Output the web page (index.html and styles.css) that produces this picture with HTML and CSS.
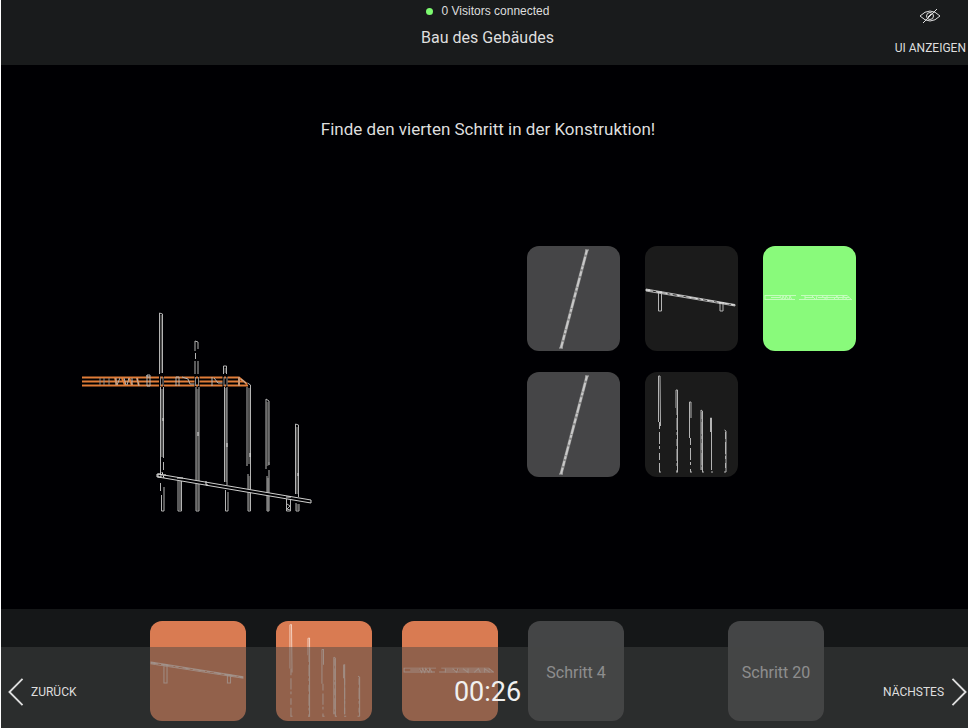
FILE: index.html
```html
<!DOCTYPE html>
<html lang="de">
<head>
<meta charset="utf-8">
<meta name="viewport" content="width=device-width, initial-scale=1">
<title>Bau des Gebäudes</title>
<link rel="stylesheet" href="styles.css">
</head>
<body>
<svg class="defs" aria-hidden="true">
  <symbol id="column" viewBox="0 0 93 105" preserveAspectRatio="none">
    <path class="band" d="M60 4 34 102"/>
    <path class="grain" d="M60 4 34 102"/>
    <path class="line" d="M58 4h4M32 102h4"/>
  </symbol>
  <symbol id="bridge" viewBox="0 0 93 105" preserveAspectRatio="none">
    <path class="line" d="M1 43 90 58.500V60L1 45Z M13.500 46V65H16.500V46 M75 56V65H78V57"/>
    <path class="bright dashed" d="M1 44 90 59"/>
    <path class="bright" d="M1 44h4M12 46h5M74 57h5M87 59h3"/>
  </symbol>
  <symbol id="poles" viewBox="0 0 93 105" preserveAspectRatio="none">
    <path class="line" d="M13.500 4h1.500L15.500 54M13.500 4V50 M31 18h1.500V100M31 18V36 M44.500 30h1.500V46M44.500 30V66 M56 38l1.500 1V100M56 38V98 M65.500 46h1V98M65.500 46V60 M79.500 58l1.500 1V100"/>
    <path class="line dashed" d="M14.500 50V100M32 36V100M45.500 66V100M57 40V98M66.500 60V100M80.500 60V96"/>
    <path class="line" d="M14 100h2M31 100h2M45 100h2M57 100h2M66 100h2M79 100h2"/>
  </symbol>
  <symbol id="truss" viewBox="0 0 93 105" preserveAspectRatio="none">
    <path class="line" d="M2 49.500H33M38 49.500H84L89 54M2 53.500H32M36 53.500H88M2 49V54M8 51.500H17M42 51.500H50M55 51.500H86"/>
    <path class="line" d="M17 50l2 4 1-4 2 4 1-4 3 4 1-4 2 4M42 54v-4M49 50l4 4 1-4M59 50l5 4v-4M70 54l4-4 2 4M80 54v-4l5 4"/>
  </symbol>
</svg>

<header class="topbar">
  <div class="topbar-center">
    <p class="status"><span class="dot"></span>0 Visitors connected</p>
    <h1 class="title">Bau des Gebäudes</h1>
  </div>
  <button class="ui-toggle" type="button">
    <svg class="eye" viewBox="0 0 24 18" aria-hidden="true">
      <path d="M2 9Q7 4 12 4T22 9Q17 14 12 14T2 9ZM5 16 19 2"/><circle cx="12" cy="9" r="3.500"/><path d="M10 10l3-3"/>
    </svg>
    UI ANZEIGEN
  </button>
</header>

<main class="main">
  <h2 class="task">Finde den vierten Schritt in der Konstruktion!</h2>
  <div class="stage">
    <svg class="sketch" viewBox="70 300 260 220" role="img" aria-label="Konstruktion">
      <g class="core">
        <path d="M161.500 315V373M162 389V457M197.500 389V510M225.500 368V373M226 388V482M249 388V464M249.500 476V510M267.500 402V466M268 478V510M297 427V494M297.500 504V510"/>
      </g>
      <g class="line">
        <path d="M159.500 374V313l3 1V373M160.500 387V474M163.500 387V458M163.500 462v8M160.500 483v8M161.500 495V511h2.500V487"/>
        <path d="M195 351V341l3 1V349M195 361V374M198 361V374M196 387V511h3V387M195.500 353v6"/>
        <path d="M223.500 374V366h3V374M224.500 387V482M227 387V485M225.500 490V511h2.500V492"/>
        <path d="M247 387V466M250.500 511V385l-3-2M248 474V511h2.500"/>
        <path d="M266 469V399l3 2V462M267 476V511h2V470"/>
        <path d="M295.500 494V424l3 1V497M296 503V511h3V504"/>
        <path d="M178 478V511h3.500V479M180 481V510M286.500 497V511h4V498M287 504l3 2-3 3 3 1"/>
      </g>
      <path class="beam" d="M158 474 311 500v3L158 477Z"/>
      <path class="bright" d="M157 474h4v3h-4ZM162 472l2 6M164 475h2M177 478h6M206 481v4h2M286 497h5M163 418v3M198 432v4M227 443v4M250 453v4M269 462v3M298 473v3"/>
      <g class="orange">
        <path d="M82 377.500H239L247 384M82 381.500H243M82 385.500H248M239 377V386M115 378l2 7M122 378l3 7M129 378l3 7M137 378l2 8"/>
      </g>
      <path class="line" d="M116 378v7M120 378l-3 7M124 378l2 7M129 378l-2 7M132 378v7M137 378l2 8M147 375h3v2h-3Zv11h3v-9M176 386v-9h3v9M182 377l6 2 2 5h5M212 377v9M214 378l4 5h6M239 377v9M241 379l5 4"/>
      <path class="grey dashed" d="M100 378v7M104 378v7M109 378v7"/>
      <path class="gap" d="M161.500 375V387M197 375V387M225 375V387"/>
      <path class="orange" d="M160 377.500h3M160 385.500h3M196 377.500h2M196 385.500h2M224 377.500h2M224 385.500h2"/>
      <path class="grey" d="M160.500 377v9M163 377v9M195.500 377v9M198.500 377v9M224 377v9M227 377v9"/>
    </svg>
    <div class="options">
      <button class="option light" type="button" aria-label="Stütze"><svg><use href="#column"/></svg></button>
      <button class="option" type="button" aria-label="Rampe"><svg><use href="#bridge"/></svg></button>
      <button class="option correct" type="button" aria-label="Träger"><svg><use href="#truss"/></svg></button>
      <button class="option light" type="button" aria-label="Stütze"><svg><use href="#column"/></svg></button>
      <button class="option" type="button" aria-label="Pfosten"><svg><use href="#poles"/></svg></button>
    </div>
  </div>
</main>

<footer class="bottom">
  <ol class="steps">
    <li class="step done"><svg><use href="#bridge"/></svg></li>
    <li class="step done"><svg><use href="#poles"/></svg></li>
    <li class="step done"><svg><use href="#truss"/></svg></li>
    <li class="step">Schritt 4</li>
    <li class="step last">Schritt 20</li>
  </ol>
  <nav class="controls">
    <button class="nav-button" type="button">
      <svg class="chevron" viewBox="0 0 16 30" aria-hidden="true"><path d="M15 1 1 15 15 29"/></svg>ZURÜCK
    </button>
    <time class="timer">00:26</time>
    <button class="nav-button next" type="button">
      NÄCHSTES<svg class="chevron" viewBox="0 0 16 30" aria-hidden="true"><path d="M1 1 15 15 1 29"/></svg>
    </button>
  </nav>
</footer>
</body>
</html>
```
FILE: styles.css
```css
* { box-sizing: border-box; }

body {
  --line: #b4b4b4;
  --bright: #e0e0e0;
  display: flex;
  flex-direction: column;
  min-height: 100vh;
  margin: 0;
  border-left: 1px solid #fff;
  background: #000003;
  color: #dedede;
  font-family: Roboto, "Liberation Sans", sans-serif;
}

button {
  border: 0;
  padding: 0;
  background: none;
  color: inherit;
  font: inherit;
  cursor: pointer;
}

svg { display: block; fill: none; }
.defs { position: absolute; width: 0; height: 0; }

.line { stroke: var(--line); stroke-width: 1; }
.bright { stroke: var(--bright); stroke-width: 1; }
.beam { fill: #000003; stroke: #cfcfcf; stroke-width: 1; }
.grey { stroke: #8c8c8c; stroke-width: 1; }
.core { stroke: #4c4c4c; stroke-width: 2; }
.band { stroke: #8c8c8c; stroke-width: 3; }
.grain { stroke: #c8c8c8; stroke-width: 2; stroke-dasharray: 5 2 9 1 3 2; }
.dashed { stroke-dasharray: 7 3 12 2 3 4; }
.orange { stroke: #e07c38; stroke-width: 2; }
.gap { stroke: #000003; stroke-width: 5; }

.topbar {
  display: grid;
  grid-template-columns: 1fr auto 1fr;
  height: 65px;
  background: #191b1c;
}
.topbar-center {
  grid-column: 2;
  padding: 3px 0 0 6px;
  text-align: center;
}
.status {
  display: flex;
  align-items: center;
  justify-content: center;
  gap: 9px;
  margin: 0;
  font: 12px/16px "Liberation Sans", sans-serif;
}
.dot {
  width: 7px;
  height: 7px;
  border-radius: 50%;
  background: #7dfa70;
}
.title {
  margin: 8px 0 0;
  font-size: 16px;
  font-weight: 400;
  line-height: 22px;
}
.ui-toggle {
  display: flex;
  flex-direction: column;
  align-items: center;
  justify-self: end;
  align-self: start;
  gap: 14px;
  padding: 7px 2px 0 0;
  font-size: 12px;
  line-height: 18px;
}
.eye { width: 24px; height: 18px; stroke: #dedede; stroke-width: 1; }

.main { flex: 1; padding: 54px 112px 0 69px; }
.task {
  margin: 0 -50px 0 0;
  font-size: 17px;
  font-weight: 400;
  line-height: 20px;
  text-align: center;
}
.stage {
  display: flex;
  justify-content: space-between;
  align-items: flex-start;
  margin-top: 107px;
}
.sketch { width: 260px; margin-top: 54px; }
.options {
  display: grid;
  grid-template-columns: repeat(3, 93px);
  gap: 21px 25px;
}
.option {
  height: 105px;
  border-radius: 12px;
  background: #1b1b1b;
}
.option.light { background: #454547; }
.option.correct {
  --line: #c4fdbc;
  background: #89fa7b;
}
.option svg, .step svg { width: 100%; height: 100%; }

.bottom { position: relative; background: #151718; }
.steps {
  display: flex;
  justify-content: center;
  gap: 30px;
  margin: 0;
  padding: 12px 0 7px 5px;
  list-style: none;
}
.step {
  display: flex;
  align-items: center;
  justify-content: center;
  width: 96px;
  height: 100px;
  padding-top: 2px;
  border-radius: 12px;
  background: #444546;
  color: #d0d0d0;
  font-size: 16px;
}
.step.done {
  --line: #f3cdbb;
  --bright: #f8ddd0;
  padding-top: 0;
  background: #d97b52;
}
.step.last { margin-left: 74px; }

/* Translucent bar laid over the lower part of the steps */
.controls {
  position: absolute;
  inset: auto 0 0;
  display: grid;
  grid-template-columns: 1fr auto 1fr;
  align-items: center;
  height: 81px;
  padding: 8px 1px 0 7px;
  background: rgba(70, 68, 68, 0.48);
}
.nav-button {
  display: flex;
  align-items: center;
  gap: 7px;
  font-size: 12px;
}
.next { justify-self: end; }
.chevron { width: 16px; height: 28px; stroke: #dedede; stroke-width: 2; }
.timer { font-size: 27px; line-height: 32px; color: #f0f0f0; }
```
